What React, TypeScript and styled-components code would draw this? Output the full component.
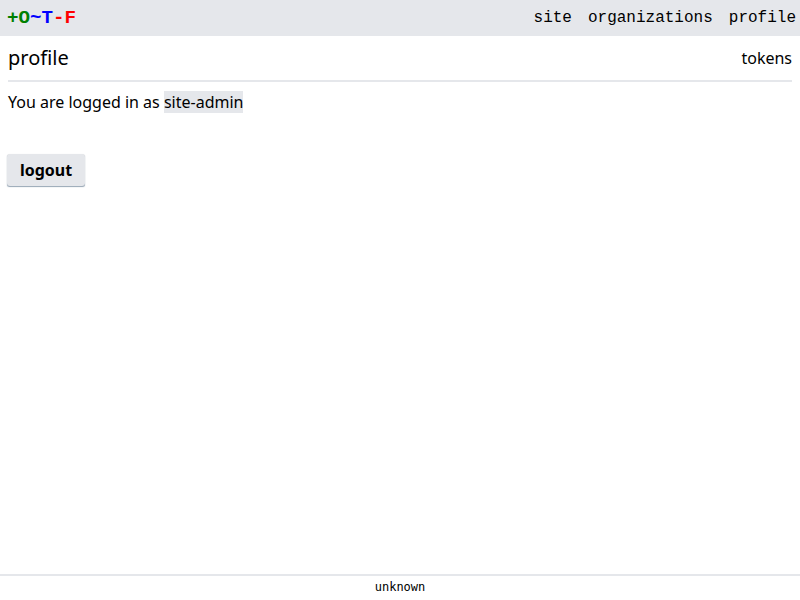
import React from "react";
import styled, { createGlobalStyle } from "styled-components";

const Global = createGlobalStyle`
  html, body { margin: 0; padding: 0; height: 100%; background: #fff; }
  #root { height: 100%; }
  body { font-family: "Noto Sans", sans-serif; color: #000; }
`;

const Page = styled.div`
  display: flex;
  flex-direction: column;
  height: 600px;
`;

const TopBar = styled.header`
  display: flex;
  align-items: center;
  justify-content: space-between;
  height: 36px;
  padding: 0 4px 0 7px;
  background: #e5e7eb;
  font-family: "Liberation Mono", monospace;
  font-size: 16px;
`;

const Logo = styled.div`
  display: flex;
  font-family: "Liberation Mono", monospace;
  font-weight: 700;
  font-size: 19.2px;
`;

const LogoChar = styled.span<{ $color: string }>`
  color: ${(p) => p.$color};
`;

const Nav = styled.nav`
  display: flex;
  gap: 16px;
`;

const NavLink = styled.a`
  color: #000;
`;

const Main = styled.main`
  flex: 1;
  padding: 0 8px;
`;

const TitleRow = styled.div`
  display: flex;
  align-items: center;
  justify-content: space-between;
  height: 44px;
  border-bottom: 2px solid #e5e7eb;
`;

const Title = styled.h1`
  margin: 0 0 2px;
  font-size: 20px;
  font-weight: 400;
`;

const TitleLink = styled.a`
  font-size: 16px;
`;

const Info = styled.p`
  margin: 8px 0 0;
  font-size: 16px;
  line-height: 24px;
`;

const Code = styled.span`
  background: #e5e7eb;
  padding: 0;
`;

const LogoutButton = styled.button`
  display: block;
  margin: 40px 0 0 -1px;
  width: 78px;
  height: 32px;
  padding: 0;
  border: none;
  border-radius: 3px;
  background: #e5e7eb;
  box-shadow: 0 1px 1px -0.5px rgba(50, 80, 110, 0.5), 0 0 1px rgba(0, 0, 0, 0.1);
  font-family: "Noto Sans", sans-serif;
  font-size: 16px;
  font-weight: 700;
  color: #000;
`;

const Footer = styled.footer`
  height: 26px;
  padding-bottom: 2px;
  box-sizing: border-box;
  border-top: 2px solid #e5e7eb;
  display: flex;
  align-items: center;
  justify-content: center;
  font-family: "DejaVu Sans Mono", monospace;
  font-size: 12px;
`;

export default function App() {
  return (
    <Page>
      <Global />
      <TopBar>
        <Logo>
          <LogoChar $color="#008000">+O</LogoChar>
          <LogoChar $color="#0000ff">~T</LogoChar>
          <LogoChar $color="#ff0000">-F</LogoChar>
        </Logo>
        <Nav>
          <NavLink>site</NavLink>
          <NavLink>organizations</NavLink>
          <NavLink>profile</NavLink>
        </Nav>
      </TopBar>
      <Main>
        <TitleRow>
          <Title>profile</Title>
          <TitleLink>tokens</TitleLink>
        </TitleRow>
        <Info>
          You are logged in as <Code>site-admin</Code>
        </Info>
        <LogoutButton>logout</LogoutButton>
      </Main>
      <Footer>unknown</Footer>
    </Page>
  );
}
